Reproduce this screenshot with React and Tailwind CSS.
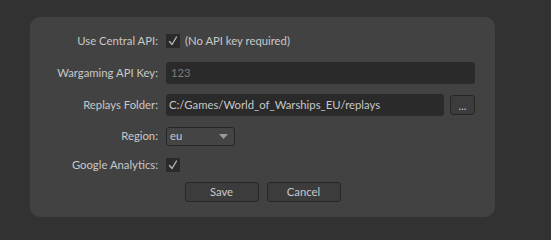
function Check() {
  return (
    <div className="w-[14px] h-[14px] bg-[#2a2a2a] flex items-center justify-center">
      <svg width="12" height="12" viewBox="0 0 12 12" fill="none">
        <path d="M2.5 6.5 L5 9.5 L9.5 2" stroke="#b4b4b4" strokeWidth="1.4" strokeLinecap="round" strokeLinejoin="round" />
      </svg>
    </div>
  );
}

function Label({ children }) {
  return <div className="text-right whitespace-nowrap pr-2">{children}</div>;
}

export default function App() {
  return (
    <div className="w-[551px] h-[240px] bg-[#323232] overflow-hidden pt-[17px] pl-[30px] font-['Lato',sans-serif]">
      <div className="w-[465px] h-[200px] bg-[#424242] rounded-[10px] pl-[20px] pr-[20px] pt-[10px]">
        <div className="grid grid-cols-[116px_1fr] items-center text-[11.3px] text-[#c8c8c8]">
          {/* Use central API */}
          <div className="h-[28px] flex items-center justify-end"><Label>Use Central API:</Label></div>
          <div className="h-[28px] flex items-center gap-[5px]">
            <Check />
            <span>(No API key required)</span>
          </div>

          {/* API key */}
          <div className="h-[36px] flex items-center justify-end"><Label>Wargaming API Key:</Label></div>
          <div className="h-[36px] flex items-center">
            <div className="w-full h-[22px] bg-[#2a2a2a] rounded-[3px] flex items-center px-[5px] text-[#7c7c7c]">123</div>
          </div>

          {/* Replays folder */}
          <div className="h-[28px] flex items-center justify-end"><Label>Replays Folder:</Label></div>
          <div className="h-[28px] flex items-center gap-[6px]">
            <div className="flex-1 h-[22px] bg-[#2a2a2a] rounded-[3px] flex items-center px-[3px] text-[#c8c8c8]">C:/Games/World_of_Warships_EU/replays</div>
            <button className="w-[25px] h-[20px] bg-[#3c3c3c] border border-[#262626] rounded-[3px] flex items-end justify-center pb-[3px] leading-none text-[#c8c8c8] text-[11px]">...</button>
          </div>

          {/* Region */}
          <div className="h-[34px] flex items-center justify-end"><Label>Region:</Label></div>
          <div className="h-[34px] flex items-center">
            <div className="w-[69px] h-[19px] bg-[#444444] border border-[#262626] rounded-[3px] flex items-center justify-between pl-[3px] pr-[6px]">
              <span>eu</span>
              <svg width="9" height="5" viewBox="0 0 9 5"><path d="M0 0 H9 L4.5 5 Z" fill="#9a9a9a" /></svg>
            </div>
          </div>

          {/* Google analytics */}
          <div className="h-[24px] flex items-center justify-end"><Label>Google Analytics:</Label></div>
          <div className="h-[24px] flex items-center"><Check /></div>
        </div>

        <div className="h-[29px] flex items-center justify-center gap-[8px] -ml-[20px] -mr-[20px]">
          <button className="w-[74px] h-[20px] bg-[#3c3c3c] border border-[#262626] rounded-[3px] text-[11.3px] text-[#c8c8c8] leading-none">Save</button>
          <button className="w-[74px] h-[20px] bg-[#3c3c3c] border border-[#262626] rounded-[3px] text-[11.3px] text-[#c8c8c8] leading-none">Cancel</button>
        </div>
      </div>
    </div>
  );
}
